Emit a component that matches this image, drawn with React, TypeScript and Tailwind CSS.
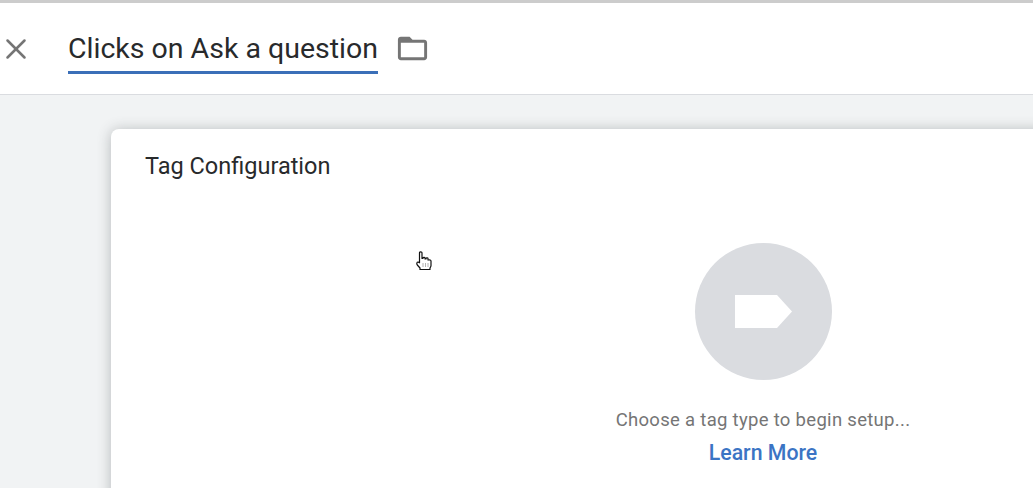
import { X } from "lucide-react"

function FolderIcon() {
  return (
    <svg width="35" height="35" viewBox="0 0 24 24" fill="#757575">
      <path d="M20 6h-8l-2-2H4c-1.100 0-2 .9-2 2v12c0 1.100.9 2 2 2h16c1.100 0 2-.9 2-2V8c0-1.100-.9-2-2-2zm0 12H4V8h16v10z" />
    </svg>
  )
}

function HandCursor() {
  return (
    <svg width="18" height="20" viewBox="0 0 18 20" className="absolute left-[416px] top-[251px]">
      <path
        d="M3.500 1.800c0-1.300 2.500-1.300 2.500 0V7.500h1V7c0-.9 2-.9 2 0v1h1v-.5c0-.9 2-.9 2 0V9h.8c.9-.4 2.200.1 2.200 1v4.500c0 1-.5 1.500-1 2.500v1.500H4v-1.500L1.300 14c-.9-1.300-.5-3 .7-3l1.500.8V1.800z"
        fill="#fff"
        stroke="#111"
        strokeWidth="1.200"
        strokeLinejoin="round"
      />
      <path d="M7 12.500v3M9.500 12.500v3M12 12.500v3" stroke="#555" strokeWidth="0.9" strokeDasharray="1 1" />
    </svg>
  )
}

export default function App() {
  return (
    <div className="relative h-[488px] w-full overflow-hidden bg-[#f1f3f4] font-['Roboto',sans-serif]">
      {/* Header */}
      <div className="flex h-[95px] items-center border-t-[3px] border-b border-t-[#cccccc] border-b-[#dadce0] bg-white">
        <X size={34} strokeWidth={1.8} className="-ml-[1px] text-[#757575]" />
        <div className="ml-[35px] mt-[7px] border-b-[3px] border-[#3b6fb8] pb-[3px]">
          <h1 className="text-[28.500px] leading-[38px] text-[#282a2c]">Clicks on Ask a question</h1>
        </div>
        <div className="ml-[17px] flex">
          <FolderIcon />
        </div>
      </div>

      {/* Tag card */}
      <div className="ml-[111px] mt-[34px] h-[500px] w-[1304px] rounded-lg bg-white pl-[34px] pt-[23px] shadow-[0_1px_14px_rgba(60,64,67,0.32)]">
        <h2 className="text-[23.500px] leading-[28px] text-[#282a2c]">Tag Configuration</h2>
        <div className="-ml-[34px] mt-[63px] flex flex-col items-center">
          <div className="flex h-[137px] w-[137px] items-center justify-center rounded-full bg-[#dadce0]">
            <svg width="57" height="33" viewBox="0 0 57 33" className="-mt-[1px]">
              <path d="M0 0H42L57 16.500L42 33H0Z" fill="#fff" />
            </svg>
          </div>
          <p className="mt-[28px] text-[18.500px] leading-[24px] tracking-[0.3px] text-[#757575]">Choose a tag type to begin setup...</p>
          <a className="mt-[9px] text-[21.300px] font-medium leading-[24px] text-[#3b74c4]">Learn More</a>
        </div>
      </div>

      <HandCursor />
    </div>
  )
}
